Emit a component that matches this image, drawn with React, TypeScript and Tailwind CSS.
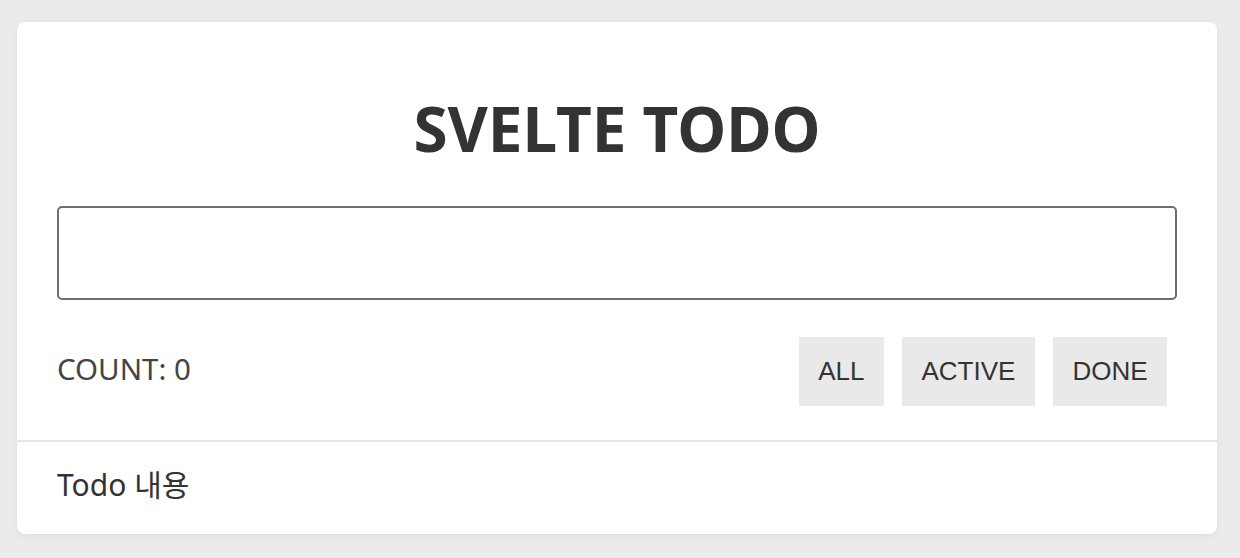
import React, { useState } from "react";

type Filter = "ALL" | "ACTIVE" | "DONE";

const App: React.FC = () => {
    const [text, setText] = useState("");
    const [filter, setFilter] = useState<Filter>("ALL");
    const filters: Filter[] = ["ALL", "ACTIVE", "DONE"];

    return (
        <div
            className="min-h-screen bg-[#ebebeb] pt-[22px] pl-[17px]"
            style={{ fontFamily: '"Noto Sans", "Noto Sans CJK KR", sans-serif' }}
        >
            <div className="w-[1200px] bg-white rounded-lg shadow-[0_2px_6px_rgba(0,0,0,0.06)]">
                <div className="px-10 pt-[66px] pb-[34px]">
                    <h1 className="text-center text-[62px] leading-[80px] font-bold text-[#333]">
                        SVELTE TODO
                    </h1>
                    <input
                        value={text}
                        onChange={(e) => setText(e.target.value)}
                        className="mt-[38px] block w-full h-[94px] border-2 border-[#6e6e6e] rounded-[5px] outline-none px-4 text-[28px]"
                    />
                    <div className="mt-[37px] flex items-center justify-between pr-[10px]">
                        <span className="text-[29.5px] text-[#444] leading-none -mt-[6px]">COUNT: 0</span>
                        <div className="flex gap-[18px]">
                            {filters.map((f) => (
                                <button
                                    key={f}
                                    onClick={() => setFilter(f)}
                                    className={`h-[69px] px-[19.5px] text-[26px] text-[#333] ${filter === f ? "bg-[#e9e9e9]" : "bg-[#e9e9e9]"}`}
                                    style={{ fontFamily: '"Liberation Sans", Arial, sans-serif' }}
                                >
                                    {f}
                                </button>
                            ))}
                        </div>
                    </div>
                </div>
                <div className="border-t-2 border-[#e6e6e6] px-10 h-[94px] flex items-center">
                    <span className="text-[30px] text-[#333] leading-none -mt-[6px]">Todo 내용</span>
                </div>
            </div>
        </div>
    );
};

export default App;
